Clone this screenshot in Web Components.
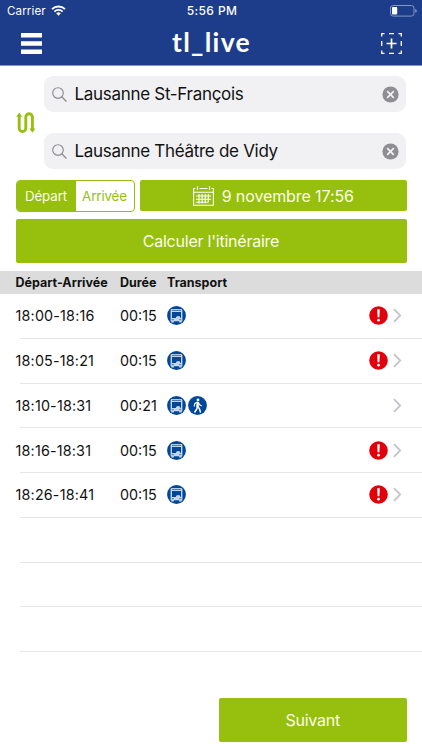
<!DOCTYPE html>
<html lang="fr">
<head>
<meta charset="utf-8">
<title>tl_live</title>
<style>
body{
	margin: 0;
	background: #fff;
	color: #111;
	font-family: Inter,"Liberation Sans",sans-serif;
}
</style>
</head>
<body>
<tl-app>
	<tl-header slot="header" carrier="Carrier" time="5:56 PM">tl_live</tl-header>
	<tl-search slot="search">Lausanne St-François</tl-search>
	<tl-search slot="search">Lausanne Théâtre de Vidy</tl-search>
	<tl-segment slot="when"><span>Départ</span><span slot="off">Arrivée</span></tl-segment>
	<tl-button slot="when" class="date"><tl-icon name="calendar"></tl-icon>9 novembre 17:56</tl-button>
	<tl-button slot="go">Calculer l'itinéraire</tl-button>
	<tl-results slot="list">
		<tl-trip hours="18:00-18:16" duration="00:15" by="bus" alert></tl-trip>
		<tl-trip hours="18:05-18:21" duration="00:15" by="bus" alert></tl-trip>
		<tl-trip hours="18:10-18:31" duration="00:21" by="bus walk"></tl-trip>
		<tl-trip hours="18:16-18:31" duration="00:15" by="bus" alert></tl-trip>
		<tl-trip hours="18:26-18:41" duration="00:15" by="bus" alert></tl-trip>
		<tl-trip></tl-trip>
		<tl-trip></tl-trip>
		<tl-trip></tl-trip>
	</tl-results>
	<tl-button slot="next">Suivant</tl-button>
</tl-app>

<script>
// Shadow root + contenu, commun à tous les éléments
const render = (el,css,html)=>{
	el.attachShadow({mode:"open"}).innerHTML = `<style>${css}</style>${html}`;
};

// name : [largeur, hauteur, contenu SVG]
const ICONS = {
	wifi: [15,11,`<g fill="none" stroke="#fff" stroke-width="1.9"><path d="M1 4.1a9.3 9.3 0 0 1 13 0"/><path d="M3.4 6.6a5.8 5.8 0 0 1 8.2 0"/></g><path fill="#fff" d="M5.2 8.3a3.3 3.3 0 0 1 4.6 0L7.5 10.7z"/>`],
	battery: [27,12,`<rect x=".5" y=".5" width="23.5" height="10.6" rx="2.6" fill="none" stroke="#8495c6"/><rect x="2" y="2" width="5.2" height="7.6" rx=".8" fill="#fff"/><path fill="#8495c6" d="M25.2 4q1.6.4 1.6 1.9t-1.6 1.9z"/>`],
	menu: [21,21,`<path fill="#fff" d="M0 0h21v4.5H0zM0 8.2h21v4.5H0zM0 16.4h21v4.5H0z"/>`],
	add: [21,21,`<path fill="none" stroke="#fff" stroke-width="1.3" d="M.7 3.5V.7h2.8M8 .7h5M17.500.7h2.800v2.800M20.300 8v5M20.300 17.500v2.800h-2.800M13 20.300H8M3.500 20.300H.7v-2.800M.7 13V8"/><path stroke="#fff" stroke-width="1.700" d="M10.500 5.500v10M5.500 10.500h10"/>`],
	lens: [15,15,`<g fill="none" stroke="#8e8e93" stroke-width="1.15"><circle cx="6" cy="6" r="5.300"/><path stroke-width="1.400" d="M9.800 9.800l4.600 4.600"/></g>`],
	clear: [17,17,`<circle cx="8.500" cy="8.500" r="8.100" fill="#8e8e93"/><path stroke="#f2f2f5" stroke-width="1.700" d="M5.200 5.200l6.600 6.600M11.800 5.200l-6.600 6.600"/>`],
	swap: [20,22,`<path fill="none" stroke="#97bf0d" stroke-width="2.900" d="M3.200 3.500V16.200a3.300 3.300 0 0 0 6.600 0V5a3.300 3.300 0 0 1 6.600 0V18"/><path fill="#97bf0d" d="M.2 4.800L3.200.6l3 4.200zM13.400 16.600h6l-3 4.200z"/>`],
	calendar: [21,20,`<g fill="none" stroke="#fff" stroke-width="1.100"><path d="M2.500 2.500H.6v16.800h19.800V2.500h-1.900M6.500 2.500h8M.6 6.300h19.800M4.500.3v3.500M16.500.3v3.500"/><path d="M3 10h15M3 13.200h15M3 16.300h12M6 8v9.500M9.100 8v9.500M12.200 8v9.500M15.300 8v8.500"/></g>`],
	bus: [19,19,`<circle cx="9.500" cy="9.500" r="9.400" fill="#00479a"/><path fill="#c3d6ec" fill-rule="evenodd" d="M4.500 3h10l.9.900v11.300h-.7v1.200h-2.600v-1.200H6.900v1.200H4.300v-1.200h-.7V3.900zM5 5.900v6.200h9V5.900z"/><path stroke="#00479a" stroke-width=".7" d="M5 4.400h9M4.800 13.700h2M12.200 13.700h2"/><path fill="#c3d6ec" d="M8.700 12.200q.3-2.200 2.500-2.200t2.300 2.200z"/>`],
	walk: [19,19,`<circle cx="9.500" cy="9.500" r="9.400" fill="#00479a"/><circle cx="10" cy="3.900" r="1.400" fill="#fff"/><g fill="none" stroke="#fff" stroke-linecap="round" stroke-linejoin="round"><path stroke-width="2.400" d="M9.700 6.900l-.2 3.600"/><path stroke-width="1.500" d="M9.500 10.500l-.7 2.500-2 3M9.900 10.300l1.500 2.500 1 3.200"/><path stroke-width="1.100" d="M9 6.200L6.700 7.800l-.4 2.300M10.500 6.500l1 2.200 1.900 1"/></g>`],
	alert: [19,19,`<circle cx="9.500" cy="9.500" r="9.300" fill="#e2000a"/><path fill="#fff" d="M8.200 3.300h2.600l-.4 7.900H8.600z"/><circle cx="9.500" cy="14.200" r="1.400" fill="#fff"/>`],
	chevron: [9,15,`<path fill="none" stroke="#c4c4c9" stroke-width="1.800" d="M1 1.200l6.200 6.300L1 13.800"/>`]
};

class TlIcon extends HTMLElement{ constructor(){
	super();
	const [w,h,body] = ICONS[this.getAttribute("name")];
	render(this,`
	:host{ display: block; flex: none; width: ${w}px; height: ${h}px; }
	svg{ display: block; }`,
	`<svg width="${w}" height="${h}" viewBox="0 0 ${w} ${h}">${body}</svg>`);
}}

class TlHeader extends HTMLElement{ constructor(){
	super();
	render(this,`
	:host{
		display: block; box-sizing: border-box; height: 66px;
		background: #1d3c8a; border-bottom: 1px solid #8796bf; color: #fff;
	}
	.status,.nav{ display: grid; grid-template-columns: 1fr auto 1fr; align-items: center; }
	.status{ height: 21px; padding: 0 5px 0 7px; font-size: 11.6px; letter-spacing: .1px; }
	.status > div{ display: flex; align-items: center; gap: 5px; }
	.status b{ font-weight: 500; font-size: 12px; letter-spacing: .4px; }
	.status tl-icon[name=battery]{ justify-self: end; }
	.nav{ height: 44px; padding: 0 20.500px; }
	.nav h1{ margin: -3px -1px 0 0; font: 700 26.500px/30px Lato,sans-serif; letter-spacing: 1.300px; }
	.nav tl-icon[name=add]{ justify-self: end; }`,
	`<div class="status">
		<div><span>${this.getAttribute("carrier")}</span><tl-icon name="wifi"></tl-icon></div>
		<b>${this.getAttribute("time")}</b>
		<tl-icon name="battery"></tl-icon>
	</div>
	<div class="nav"><tl-icon name="menu"></tl-icon><h1><slot></slot></h1><tl-icon name="add"></tl-icon></div>`);
}}

class TlSearch extends HTMLElement{ constructor(){
	super();
	render(this,`
	:host{
		display: flex; align-items: center; box-sizing: border-box; height: 36px;
		padding: 0 7px 0 8px; border-radius: 9px; background: #f1f1f4;
	}
	.txt{ flex: 1; margin-left: 7.500px; font-size: 17px; letter-spacing: -.300px; white-space: nowrap; }`,
	`<tl-icon name="lens"></tl-icon><span class="txt"><slot></slot></span><tl-icon name="clear"></tl-icon>`);
}}

class TlSegment extends HTMLElement{ constructor(){
	super();
	render(this,`
	:host{
		display: grid; grid-template-columns: 59px 1fr; box-sizing: border-box; width: 119px; height: 32px;
		border: 1px solid #97bf0d; border-radius: 4px; overflow: hidden;
		font-size: 13.300px; letter-spacing: -.100px; line-height: 30px; text-align: center;
	}
	.on{ background: #97bf0d; color: #fbffe8; }
	.off{ color: #97bf0d; }`,
	`<div class="on"><slot></slot></div><div class="off"><slot name="off"></slot></div>`);
}}

class TlButton extends HTMLElement{ constructor(){
	super();
	render(this,`
	:host{
		display: flex; align-items: center; justify-content: center; box-sizing: border-box; height: 44px;
		border-radius: 2px; background: #97bf0d; color: #fbffe8; font-size: 16px; letter-spacing: -.230px; white-space: nowrap;
	}
	:host(.date){ height: 31px; gap: 8px; letter-spacing: -.100px; }`,
	`<slot></slot>`);
}}

class TlTrip extends HTMLElement{ constructor(){
	super();
	const get = n=>this.getAttribute(n) || "";
	const icons = get("by").split(" ").filter(Boolean).map( n=>`<tl-icon name="${n}"></tl-icon>` ).join("");
	render(this,`
	:host{ display: block; height: 44.750px; font-size: 14.300px; }
	.row{
		display: grid; grid-template-columns: 104.500px 46.500px 1fr auto auto; align-items: center;
		box-sizing: border-box; height: 43.750px; padding: 0 20px 0 15.500px;
	}
	.hours{ letter-spacing: .200px; }
	.by{ display: flex; gap: 2.500px; }
	.alert{ margin-right: 5px; }
	hr{ margin: 0 0 0 20px; border: 0; height: 1px; background: #e7e7e9; }`,
	`<div class="row">${ get("hours") ? `
		<span class="hours">${get("hours")}</span><span>${get("duration")}</span><div class="by">${icons}</div>
		<div class="alert">${ this.hasAttribute("alert") ? `<tl-icon name="alert"></tl-icon>` : "" }</div>
		<tl-icon name="chevron"></tl-icon>` : "" }
	</div><hr>`);
}}

class TlResults extends HTMLElement{ constructor(){
	super();
	render(this,`
	:host{ display: block; }
	.head{
		display: grid; grid-template-columns: 104.500px 47px 1fr; align-items: center;
		height: 23px; padding-left: 15.500px; background: #dcdcdc; font-size: 12.500px; font-weight: 700;
	}`,
	`<div class="head"><span>Départ-Arrivée</span><span>Durée</span><span>Transport</span></div><slot></slot>`);
}}

class TlApp extends HTMLElement{ constructor(){
	super();
	render(this,`
	:host{ display: flex; flex-direction: column; box-sizing: border-box; width: 422px; height: 750px; padding-bottom: 8.500px; overflow: hidden; }
	.places{ display: flex; align-items: center; gap: 8px; padding: 10px 16px 0; }
	.fields{ flex: 1; display: grid; gap: 21px; }
	.when{ display: grid; grid-template-columns: 119px 1fr; gap: 5.500px; padding: 11px 15.500px 0; }
	.go{ padding: 7px 15.500px 8px; }
	.next{ margin-top: auto; align-self: flex-end; width: 187.500px; padding-right: 15.500px; }`,
	`<slot name="header"></slot>
	<div class="places"><tl-icon name="swap"></tl-icon><div class="fields"><slot name="search"></slot></div></div>
	<div class="when"><slot name="when"></slot></div>
	<div class="go"><slot name="go"></slot></div>
	<slot name="list"></slot>
	<div class="next"><slot name="next"></slot></div>`);
}}

const define = (n,c)=>window.customElements.define(n,c);
define("tl-icon",TlIcon);
define("tl-header",TlHeader);
define("tl-search",TlSearch);
define("tl-segment",TlSegment);
define("tl-button",TlButton);
define("tl-trip",TlTrip);
define("tl-results",TlResults);
define("tl-app",TlApp);
</script>
</body>
</html>
